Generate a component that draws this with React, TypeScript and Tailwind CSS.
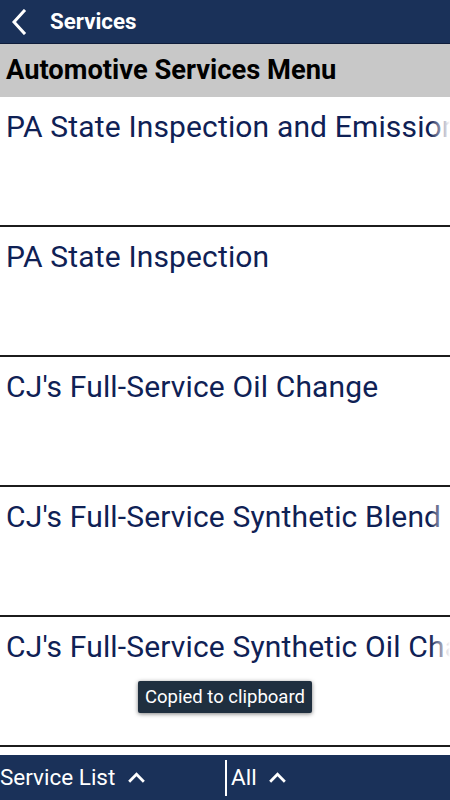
import React from "react";

const items = [
  "PA State Inspection and Emissions",
  "PA State Inspection",
  "CJ's Full-Service Oil Change",
  "CJ's Full-Service Synthetic Blend Oil Change",
  "CJ's Full-Service Synthetic Oil Change",
];

function Chevron({ className }: { className?: string }) {
  return (
    <svg viewBox="0 0 16 10" className={className} fill="none" stroke="white" strokeWidth="2.6" strokeLinecap="square">
      <path d="M2 8 L8 2 L14 8" />
    </svg>
  );
}

export default function App() {
  return (
    <div
      className="relative w-[450px] h-[800px] overflow-hidden bg-white flex flex-col"
      style={{ fontFamily: "Roboto, 'Noto Sans', sans-serif" }}
    >
      <div className="h-[44px] bg-[#1a3159] border-b border-[#0e1c3a] flex items-center shrink-0">
        <svg viewBox="0 0 16 26" className="w-[16px] h-[26px] ml-[11px]" fill="none" stroke="white" strokeWidth="3" strokeLinecap="square">
          <path d="M13 2 L3 13 L13 24" />
        </svg>
        <span className="ml-[23px] text-white font-bold text-[22.3px] leading-none">Services</span>
      </div>
      <div className="h-[53px] bg-[#c8c8c8] flex items-center px-[6px] shrink-0">
        <span className="text-black font-bold text-[27.3px] leading-none whitespace-nowrap">Automotive Services Menu</span>
      </div>
      <div className="flex-1 flex flex-col">
        {items.map((t) => (
          <div key={t} className="relative h-[130px] border-b-2 border-[#1c1c1c] shrink-0 overflow-hidden">
            <div className="pl-[6px] pt-[12px] whitespace-nowrap text-[30px] tracking-[0.15px] leading-[36px] text-[#0f2155]">{t}</div>
            <div className="absolute right-0 top-0 h-[60px] w-[20px] bg-gradient-to-r from-transparent to-white" />
          </div>
        ))}
      </div>
      <div className="h-[45px] bg-[#1a3159] flex items-center shrink-0 text-white">
        <div className="w-[225px] flex items-center">
          <span className="text-[22.5px] leading-none">Service List</span>
          <Chevron className="w-[17px] h-[11px] ml-[13px]" />
        </div>
        <div className="w-[2px] h-[36px] bg-white" />
        <div className="flex items-center ml-[4px]">
          <span className="text-[22.5px] leading-none">All</span>
          <Chevron className="w-[17px] h-[11px] ml-[12px]" />
        </div>
      </div>
      <div className="absolute left-[138px] top-[681px] w-[174px] h-[32px] bg-[#1f2f3f] rounded-[2px] shadow-[0_1px_4px_rgba(0,0,0,0.5)] flex items-center justify-center">
        <span className="text-white text-[18.5px] leading-none">Copied to clipboard</span>
      </div>
    </div>
  );
}
